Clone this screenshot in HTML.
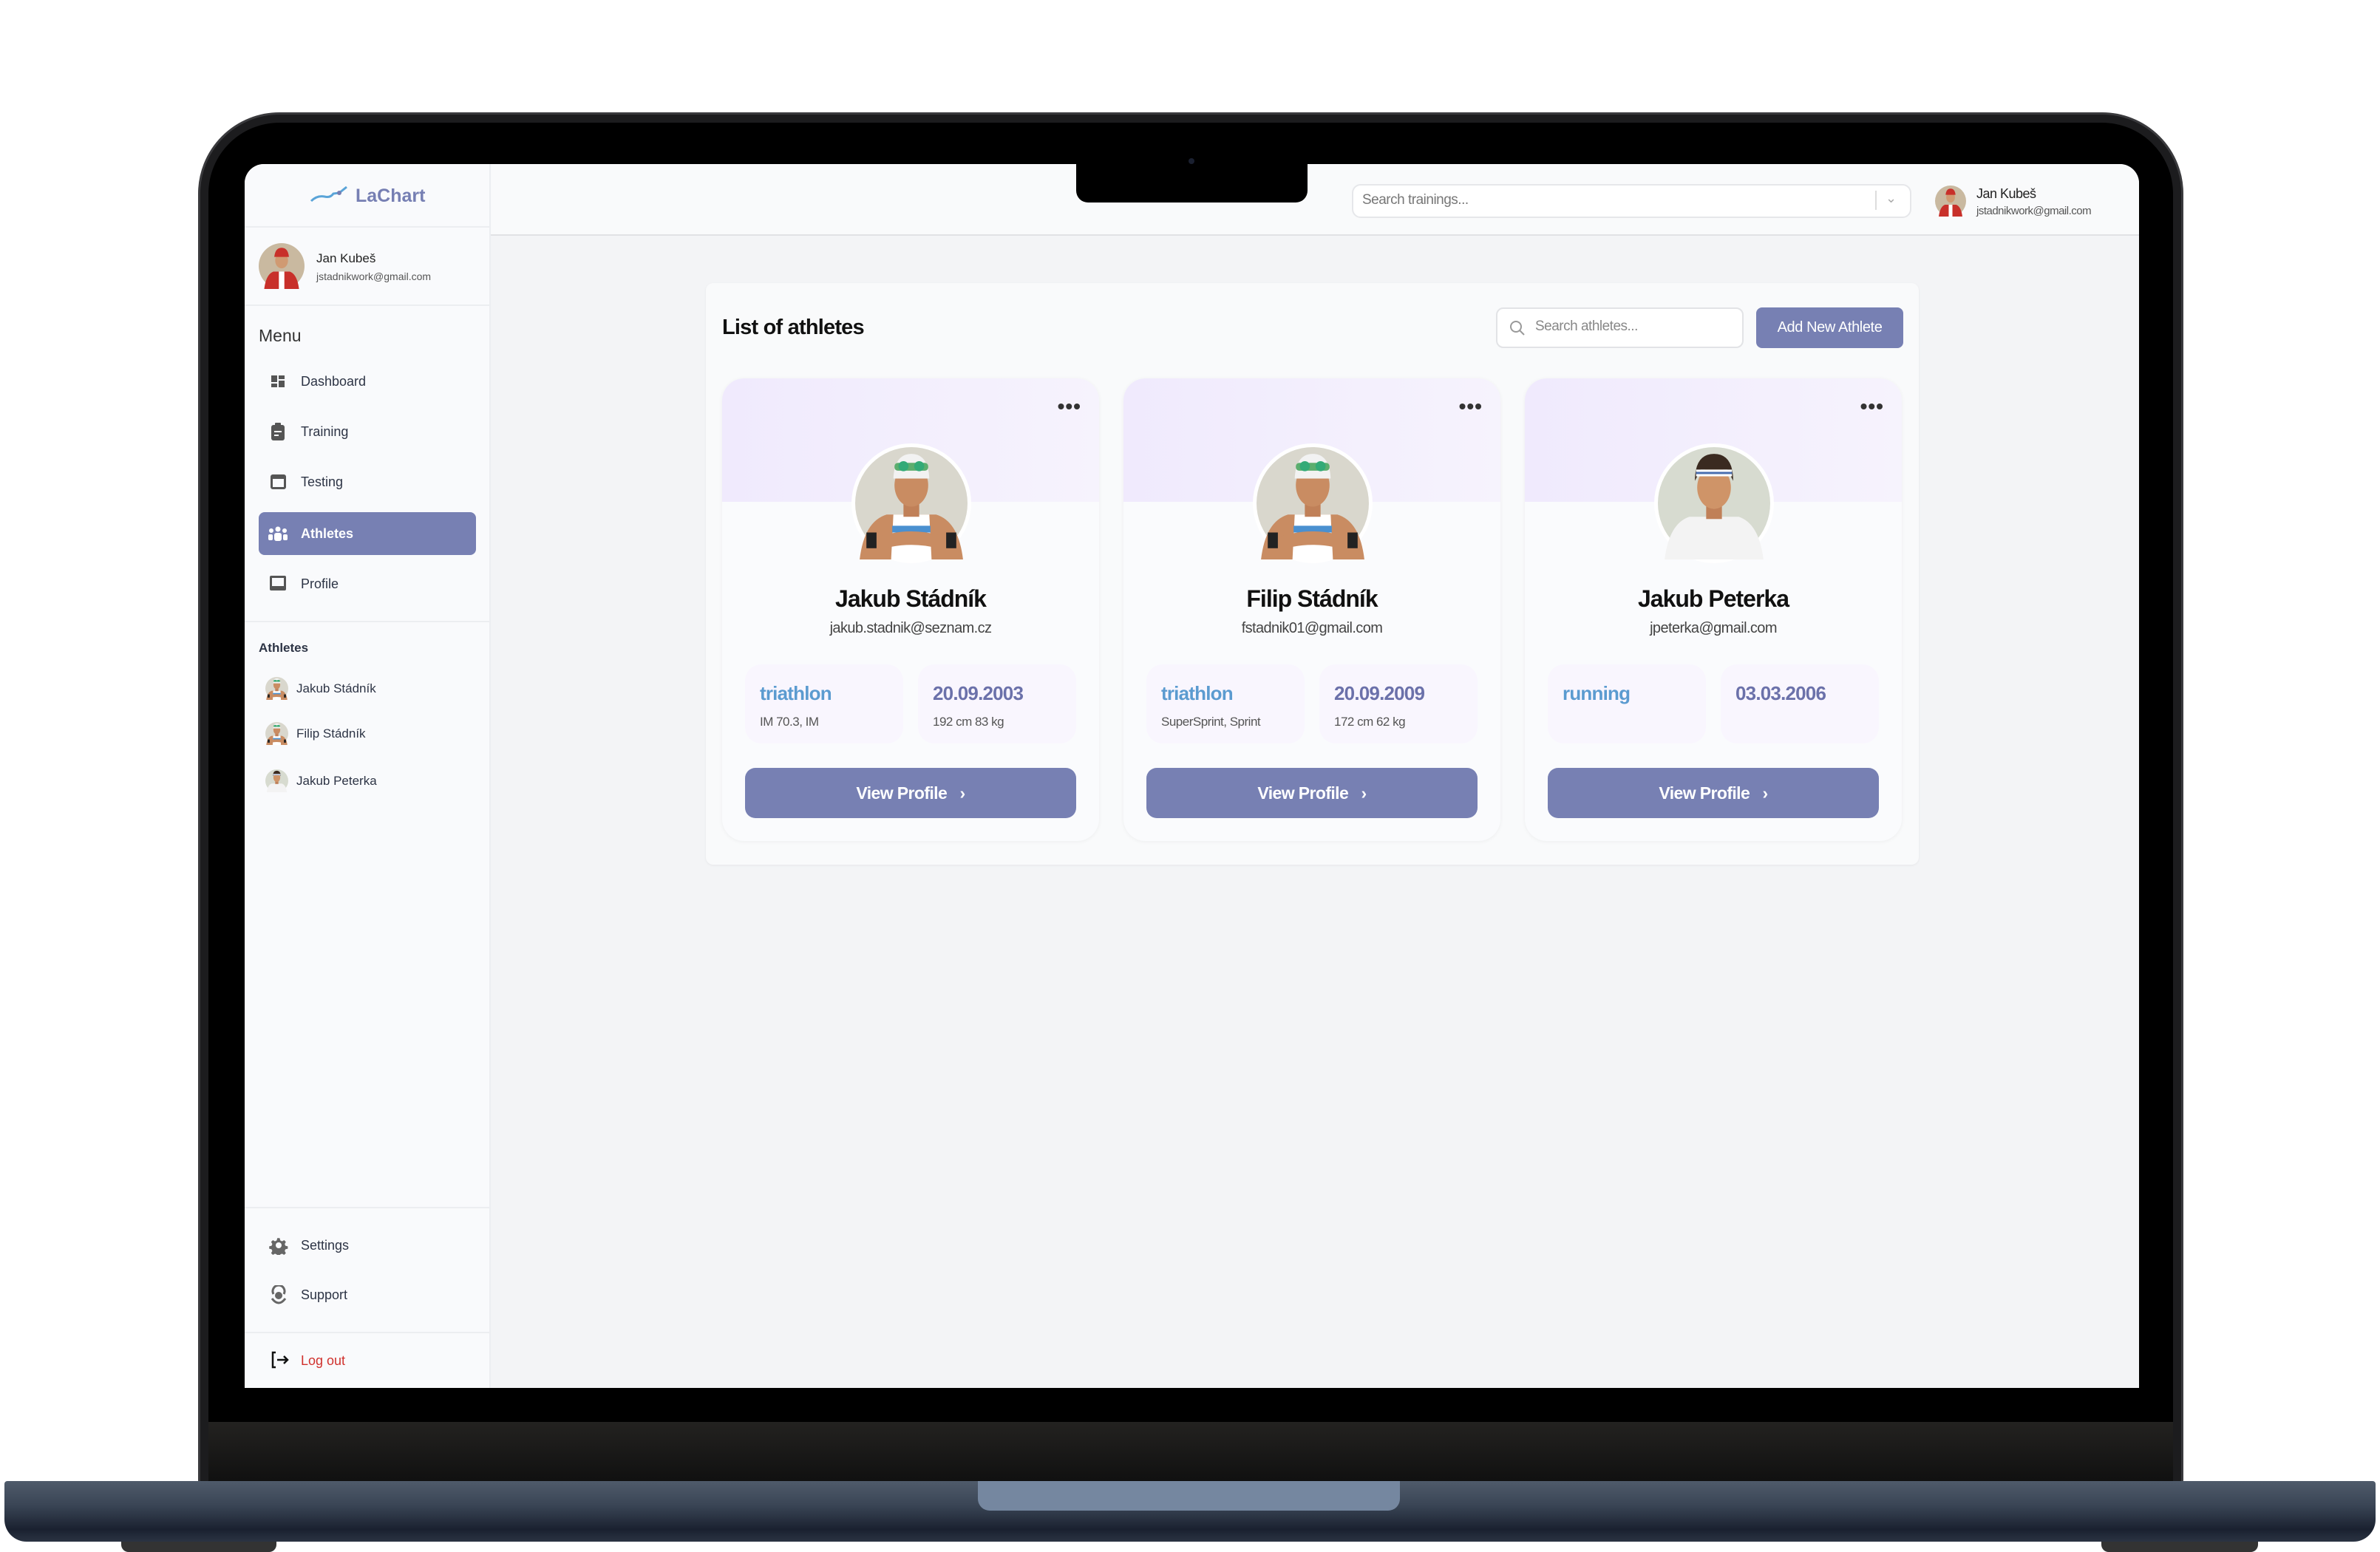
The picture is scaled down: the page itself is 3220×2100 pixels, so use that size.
<!DOCTYPE html>
<html><head><meta charset="utf-8"><style>
*{margin:0;padding:0;box-sizing:border-box}
body{width:3220px;height:2100px;background:#fff;position:relative;overflow:hidden;font-family:"Liberation Sans",sans-serif}
.a{position:absolute}
.t{position:absolute;white-space:nowrap}
.side{font-size:18px;color:#2d3445}
.card{position:absolute;top:512px;width:510px;height:626px;background:#fafbfd;border-radius:30px;box-shadow:0 1px 6px rgba(0,0,0,.05);overflow:hidden}
.card .hd{position:absolute;left:0;top:0;width:100%;height:167px;background:linear-gradient(90deg,#f0eafd,#f6f3fd)}
.card .av{position:absolute;left:175px;top:88px;width:162px;height:162px;border-radius:50%;background:#fff;padding:5px}
.card .nm{position:absolute;top:280px;width:100%;text-align:center;font-size:32px;font-weight:bold;color:#111;letter-spacing:-1px}
.card .em{position:absolute;top:327px;width:100%;text-align:center;font-size:20px;color:#444;letter-spacing:-.6px}
.card .bx{position:absolute;top:387px;width:214px;height:107px;border-radius:22px;background:#f9f6fe}
.card .bx b{position:absolute;left:20px;top:24px;font-size:26px;letter-spacing:-.8px}
.card .bx i{position:absolute;left:20px;top:68px;font-size:17px;font-style:normal;color:#555;letter-spacing:-.5px}
.card .btn{position:absolute;left:31px;top:527px;width:448px;height:68px;border-radius:14px;background:#7780b3;color:#fff;font-size:23px;font-weight:bold;text-align:center;line-height:68px;letter-spacing:-.6px}
.dots{position:absolute;right:24px;top:22px;font-size:28px;color:#333;letter-spacing:1px;font-weight:bold}
</style></head><body>
<svg width="0" height="0" style="position:absolute"><defs>
<symbol id="sw" viewBox="0 0 100 100"><circle cx="50" cy="50" r="50" fill="#d9d7cd"/><path d="M4 100 Q8 66 28 60 L72 60 Q92 66 96 100Z" fill="#c98c62"/><path d="M34 60 L66 60 L68 100 L32 100Z" fill="#fff"/><rect x="33" y="70" width="34" height="6" fill="#4a90d0"/><rect x="33" y="80" width="34" height="5" fill="#4a90d0"/><path d="M14 82 Q50 68 86 82 L86 94 Q50 80 14 94Z" fill="#c98c62"/><rect x="10" y="76" width="9" height="14" fill="#222"/><rect x="81" y="76" width="9" height="14" fill="#222"/><rect x="43" y="48" width="14" height="14" fill="#c08058"/><ellipse cx="50" cy="34" rx="15" ry="19" fill="#c98c62"/><path d="M34 28 Q35 6 50 6 Q65 6 66 28Z" fill="#f2f2f2"/><rect x="35" y="14" width="30" height="7" rx="3" fill="#5cae6e"/><circle cx="43" cy="17" r="4.5" fill="#3a7"/><circle cx="57" cy="17" r="4.5" fill="#3a7"/></symbol>
<symbol id="rn" viewBox="0 0 100 100"><circle cx="50" cy="50" r="50" fill="#d7dbd0"/><path d="M6 100 Q10 68 28 62 L72 62 Q90 68 94 100Z" fill="#f3f3f3"/><rect x="43" y="50" width="14" height="14" fill="#c08058"/><ellipse cx="50" cy="36" rx="15" ry="19" fill="#cf9468"/><path d="M33 30 Q33 6 50 6 Q67 6 67 30 L62 20 L38 20Z" fill="#3a2a20"/><rect x="34" y="20" width="32" height="6" fill="#fff"/><rect x="34" y="22" width="32" height="2" fill="#4a6fb0"/></symbol>
<symbol id="jk" viewBox="0 0 100 100"><circle cx="50" cy="50" r="50" fill="#c9b9a0"/><path d="M12 100 Q16 68 32 62 L68 62 Q84 68 88 100Z" fill="#c8302a"/><rect x="44" y="62" width="12" height="38" fill="#fff"/><ellipse cx="50" cy="38" rx="14" ry="17" fill="#d09a72"/><path d="M34 30 Q36 10 50 10 Q64 10 66 30Z" fill="#c8302a"/></symbol>
</defs></svg>

<!-- laptop lid -->
<div class="a" style="left:268px;top:152px;width:2686px;height:1880px;background:#1c1c1e;border-radius:110px 110px 30px 30px;border:3px solid #3a3a3d"></div>
<div class="a" style="left:282px;top:166px;width:2658px;height:1840px;background:#000;border-radius:96px 96px 20px 20px"></div>
<div class="a" style="left:282px;top:1924px;width:2658px;height:82px;background:linear-gradient(#232220,#101010)"></div>
<!-- base -->
<div class="a" style="left:6px;top:2004px;width:3208px;height:82px;background:linear-gradient(#4f5b6b,#3a4555 40%,#1a2130 80%,#2a3342);border-radius:4px 4px 30px 30px"></div>
<div class="a" style="left:1323px;top:2004px;width:571px;height:40px;background:#7587a0;border-radius:0 0 16px 16px"></div>
<div class="a" style="left:164px;top:2086px;width:210px;height:14px;background:#333;border-radius:0 0 10px 10px"></div>
<div class="a" style="left:2843px;top:2086px;width:212px;height:14px;background:#333;border-radius:0 0 10px 10px"></div>

<!-- screen -->
<div class="a" style="left:331px;top:222px;width:2563px;height:1656px;background:#f3f4f6;border-radius:26px 26px 0 0;overflow:hidden">
 <!-- header -->
 <div class="a" style="left:333px;top:0;width:2230px;height:97px;background:#f9fafb;border-bottom:2px solid #e1e2e5"></div>
 <div class="a" style="left:1498px;top:27px;width:757px;height:46px;background:#fff;border:2px solid #e6e7ea;border-radius:12px"></div>
 <div class="t" style="left:1512px;top:38px;font-size:19px;color:#777;letter-spacing:-.5px">Search trainings...</div>
 <div class="a" style="left:2206px;top:36px;width:2px;height:26px;background:#ddd"></div>
 <div class="t" style="left:2220px;top:36px;font-size:18px;color:#aaa">⌄</div>
 <svg class="a" style="left:2287px;top:28px" width="42" height="44"><use href="#jk"/></svg>
 <div class="t" style="left:2343px;top:30px;font-size:18px;color:#222;letter-spacing:-.5px">Jan Kubeš</div>
 <div class="t" style="left:2343px;top:55px;font-size:15px;color:#555;letter-spacing:-.5px">jstadnikwork@gmail.com</div>
 <!-- sidebar -->
 <div class="a side" style="left:0;top:0;width:333px;height:1656px;background:#f9fafc;border-right:2px solid #eceef1">
  <div class="a" style="left:0;top:84px;width:333px;height:2px;background:#eceef1"></div>
  <svg class="a" style="left:88px;top:28px" width="52" height="24"><path d="M2 22 Q10 14 20 16 Q28 18 32 12 L40 11 L50 3" stroke="#5aa4d8" stroke-width="3" fill="none"/><circle cx="40" cy="11" r="3" fill="#767fb3"/></svg>
  <div class="t" style="left:150px;top:29px;font-size:25px;font-weight:bold;color:#767fb3">LaChart</div>
  <svg class="a" style="left:19px;top:107px" width="62" height="62"><use href="#jk"/></svg>
  <div class="t" style="left:97px;top:118px;font-size:17px;color:#222">Jan Kubeš</div>
  <div class="t" style="left:97px;top:144px;font-size:14px;color:#555">jstadnikwork@gmail.com</div>
  <div class="a" style="left:0;top:190px;width:333px;height:2px;background:#eceef1"></div>
  <div class="t" style="left:19px;top:219px;font-size:23px;color:#333">Menu</div>
  <svg class="a" style="left:36px;top:286px" width="18" height="16"><rect x="0" y="0" width="8" height="9" fill="#555"/><rect x="10" y="0" width="8" height="5" fill="#555"/><rect x="0" y="11" width="8" height="5" fill="#555"/><rect x="10" y="7" width="8" height="9" fill="#555"/></svg>
  <div class="t" style="left:76px;top:284px">Dashboard</div>
  <svg class="a" style="left:36px;top:350px" width="18" height="24"><rect x="0" y="3" width="18" height="21" rx="3" fill="#555"/><rect x="5" y="0" width="8" height="6" rx="1" fill="#555"/><rect x="4" y="11" width="10" height="2" fill="#f9fafc"/><rect x="4" y="16" width="6" height="2" fill="#f9fafc"/></svg>
  <div class="t" style="left:76px;top:352px">Training</div>
  <div class="a" style="left:35px;top:420px;width:21px;height:20px;border:3px solid #555;border-top-width:6px;border-radius:3px"></div>
  <div class="t" style="left:76px;top:420px">Testing</div>
  <div class="a" style="left:19px;top:471px;width:294px;height:58px;background:#7780b3;border-radius:8px"></div>
  <svg class="a" style="left:32px;top:490px" width="26" height="20"><circle cx="13" cy="4" r="3.5" fill="#fff"/><circle cx="4" cy="6" r="3" fill="#fff"/><circle cx="22" cy="6" r="3" fill="#fff"/><rect x="8" y="9" width="10" height="11" rx="3" fill="#fff"/><rect x="0" y="11" width="6" height="8" rx="2" fill="#fff"/><rect x="20" y="11" width="6" height="8" rx="2" fill="#fff"/></svg>
  <div class="t" style="left:76px;top:490px;color:#fff;font-weight:bold">Athletes</div>
  <div class="a" style="left:34px;top:557px;width:22px;height:20px;border:3px solid #555;border-bottom-width:6px;border-radius:2px"></div>
  <div class="t" style="left:76px;top:558px">Profile</div>
  <div class="a" style="left:0;top:618px;width:333px;height:2px;background:#eceef1"></div>
  <div class="t" style="left:19px;top:645px;font-size:17px;font-weight:bold;color:#2d3445">Athletes</div>
  <svg class="a" style="left:28px;top:694px" width="31" height="31"><use href="#sw"/></svg>
  <div class="t" style="left:70px;top:700px;font-size:17px">Jakub Stádník</div>
  <svg class="a" style="left:28px;top:755px" width="31" height="31"><use href="#sw"/></svg>
  <div class="t" style="left:70px;top:761px;font-size:17px">Filip Stádník</div>
  <svg class="a" style="left:28px;top:819px" width="31" height="31"><use href="#rn"/></svg>
  <div class="t" style="left:70px;top:825px;font-size:17px">Jakub Peterka</div>
  <div class="a" style="left:0;top:1411px;width:333px;height:2px;background:#eceef1"></div>
  <svg class="a" style="left:33px;top:1450px" width="26" height="26" viewBox="0 0 26 26"><path d="M11 1h4l1 4 3 1.5 3.5-2 3 3-2 3.5 1.2 3 4 1v4l-4 1-1.2 3 2 3.5-3 3-3.5-2-3 1.2-1 4h-4l-1-4-3-1.2-3.5 2-3-3 2-3.5-1.2-3-4-1v-4l4-1 1.2-3-2-3.5 3-3 3.5 2 3-1.5z" fill="#666" transform="scale(.8) translate(3,3)"/><circle cx="13" cy="13" r="4" fill="#f9fafc"/></svg>
  <div class="t" style="left:76px;top:1453px">Settings</div>
  <svg class="a" style="left:35px;top:1517px" width="22" height="28"><path d="M4 12 A8 8 0 1 1 18 12" stroke="#666" stroke-width="3" fill="none"/><circle cx="11" cy="14" r="5" fill="#666"/><path d="M2 18 Q11 30 20 18" stroke="#666" stroke-width="3" fill="none"/></svg>
  <div class="t" style="left:76px;top:1520px">Support</div>
  <div class="a" style="left:0;top:1580px;width:333px;height:2px;background:#eceef1"></div>
  <svg class="a" style="left:35px;top:1606px" width="26" height="24"><path d="M7 2 H3 V22 H7" stroke="#111" stroke-width="2.5" fill="none"/><path d="M9 12 H23 M18 7 L23 12 L18 17" stroke="#111" stroke-width="2.5" fill="none"/></svg>
  <div class="t" style="left:76px;top:1609px;color:#d0312d">Log out</div>
 </div>
 <!-- panel -->
 <div class="a" style="left:624px;top:161px;width:1641px;height:787px;background:#f9fafb;border-radius:10px;box-shadow:0 1px 3px rgba(0,0,0,.06)"></div>
 <div class="t" style="left:646px;top:205px;font-size:29px;font-weight:bold;color:#111;letter-spacing:-.8px">List of athletes</div>
 <div class="a" style="left:1693px;top:194px;width:335px;height:55px;background:#fff;border:2px solid #e2e3e6;border-radius:10px"></div>
 <svg class="a" style="left:1710px;top:210px" width="24" height="24"><circle cx="10" cy="10" r="7" stroke="#999" stroke-width="2" fill="none"/><path d="M15 15 L21 21" stroke="#999" stroke-width="2"/></svg>
 <div class="t" style="left:1746px;top:209px;font-size:19px;color:#888;letter-spacing:-.5px">Search athletes...</div>
 <div class="a" style="left:2045px;top:194px;width:199px;height:55px;background:#7780b3;border-radius:8px;color:#fff;font-size:20px;text-align:center;line-height:55px;letter-spacing:-.4px">Add New Athlete</div>
</div>

<!-- cards -->
<div class="card" style="left:977px"><div class="hd"></div><div class="dots">•••</div><div class="av"><svg width="152" height="152"><use href="#sw"/></svg></div><div class="nm">Jakub Stádník</div><div class="em">jakub.stadnik@seznam.cz</div><div class="bx" style="left:31px"><b style="color:#5b9bd0">triathlon</b><i>IM 70.3, IM</i></div><div class="bx" style="left:265px"><b style="color:#6b71aa">20.09.2003</b><i>192 cm 83 kg</i></div><div class="btn">View Profile &nbsp; ›</div></div>
<div class="card" style="left:1520px"><div class="hd"></div><div class="dots">•••</div><div class="av"><svg width="152" height="152"><use href="#sw"/></svg></div><div class="nm">Filip Stádník</div><div class="em">fstadnik01@gmail.com</div><div class="bx" style="left:31px"><b style="color:#5b9bd0">triathlon</b><i>SuperSprint, Sprint</i></div><div class="bx" style="left:265px"><b style="color:#6b71aa">20.09.2009</b><i>172 cm 62 kg</i></div><div class="btn">View Profile &nbsp; ›</div></div>
<div class="card" style="left:2063px"><div class="hd"></div><div class="dots">•••</div><div class="av"><svg width="152" height="152"><use href="#rn"/></svg></div><div class="nm">Jakub Peterka</div><div class="em">jpeterka@gmail.com</div><div class="bx" style="left:31px"><b style="color:#5b9bd0">running</b></div><div class="bx" style="left:265px"><b style="color:#6b71aa">03.03.2006</b></div><div class="btn">View Profile &nbsp; ›</div></div>

<!-- notch -->
<div class="a" style="left:1456px;top:222px;width:313px;height:52px;background:#000;border-radius:0 0 16px 16px"></div>
<div class="a" style="left:1608px;top:214px;width:8px;height:8px;background:#1a2030;border-radius:50%"></div>
</body></html>
